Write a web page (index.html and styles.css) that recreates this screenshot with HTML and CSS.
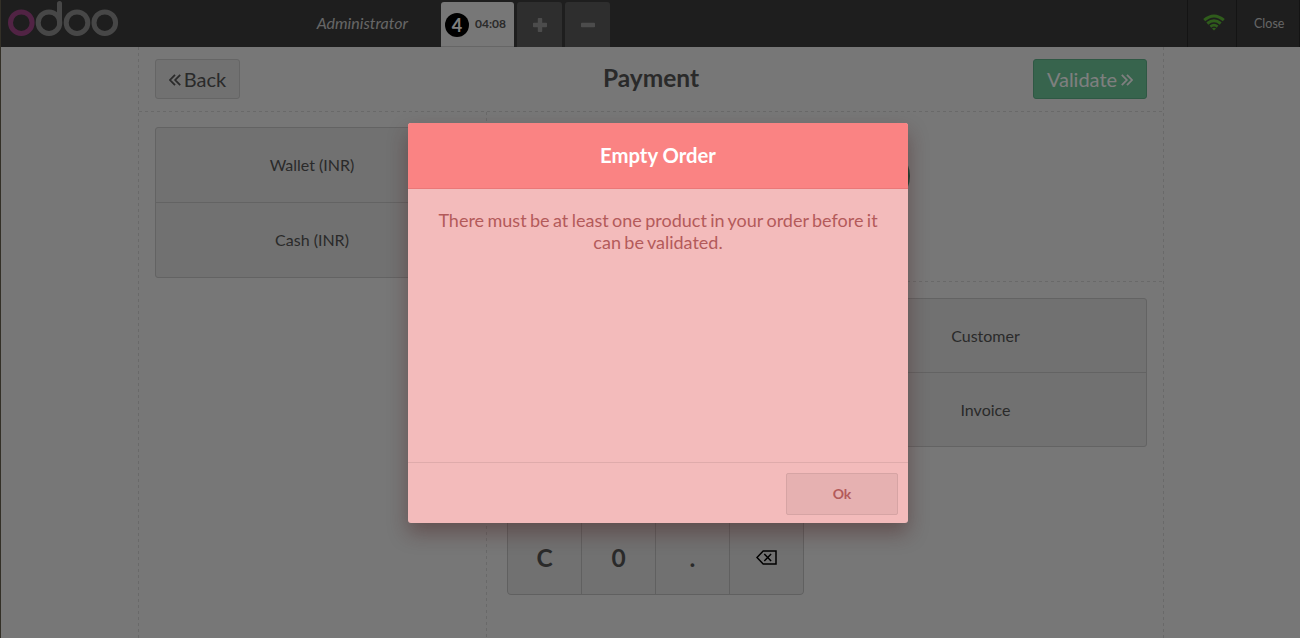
FILE: index.html
```html
<!DOCTYPE html>
<html lang="en">
<head>
<meta charset="utf-8">
<title>Payment</title>
<link rel="stylesheet" href="styles.css">
</head>
<body>
<div class="pos">
  <header class="topbar">
    <svg class="logo" width="112" height="38" viewBox="0 0 112 38" fill="none" stroke="#8f8f8f" stroke-width="5">
      <circle cx="14.3" cy="22.7" r="10.8" stroke="#a24689"/>
      <circle cx="42" cy="22.7" r="10.8"/>
      <path d="M52.5 23V3.500" stroke-linecap="round"/>
      <circle cx="70" cy="22.7" r="10.8"/>
      <circle cx="97.800" cy="22.7" r="10.8"/>
    </svg>
    <span class="username">Administrator</span>
    <nav class="orders">
      <div class="order-tab"><span class="order-no">4</span><span class="order-time">04:08</span></div>
      <div class="square-tab"><svg width="14" height="14" viewBox="0 0 14 14"><path d="M5.6 0h2.8q.8 0 .8.8v4h4q.8 0 .8.8v2.8q0 .8-.8.8h-4v4q0 .8-.8.8H5.6q-.8 0-.8-.8v-4h-4Q0 9.200 0 8.400V5.600q0-.8.8-.8h4v-4q0-.8.8-.8z"/></svg></div>
      <div class="square-tab"><svg width="14" height="14" viewBox="0 0 14 14"><rect y="4.800" width="14" height="4.400" rx=".8"/></svg></div>
    </nav>
    <div class="status">
      <svg width="22" height="17" viewBox="0 0 22 17" fill="none" stroke="#5eb937" stroke-width="3">
        <path d="M1.200 6.200Q11-2.200 20.800 6.200"/><path d="M4.300 9.500Q11 4.100 17.700 9.500"/><path d="M7.400 12.600Q11 9.800 14.600 12.600" stroke-width="2.600"/><path d="M9 14.400Q11 13 13 14.400L11 16.600Z" fill="#5eb937" stroke="none"/>
      </svg>
    </div>
    <div class="close">Close</div>
  </header>

  <main class="screen">
    <div class="heading">
      <button class="nav-btn back"><svg width="12" height="12" viewBox="0 0 12 12"><path d="M6 .8L1 6l5 5.200M11.200.8L6.200 6l5 5.200"/></svg>Back</button>
      <h1>Payment</h1>
      <button class="nav-btn next">Validate<svg width="12" height="12" viewBox="0 0 12 12"><path d="M.8.8l5 5.200-5 5.200M6 .8L11 6l-5 5.200"/></svg></button>
    </div>
    <div class="columns">
      <section class="methods">
        <div class="stack methods-list"><div>Wallet (INR)</div><div>Cash (INR)</div></div>
      </section>
      <section class="details">
        <div class="lines"><span class="bubble"></span></div>
        <div class="controls">
          <div class="keypad">
            <i></i><i></i><i></i><i></i>
            <i></i><i></i><i></i><i></i>
            <i></i><i></i><i></i><i></i>
            <i>C</i><i>0</i><i>.</i>
            <i><svg width="21" height="15" viewBox="0 0 21 15" fill="none" stroke="#000" stroke-width="1.500"><path d="M7.200 1H20v13H7.200L1 7.500z"/><path d="M8.300 4l6.800 7M15.100 4l-6.800 7"/></svg></i>
          </div>
          <div class="stack options"><div>Customer</div><div>Invoice</div></div>
        </div>
      </section>
    </div>
  </main>
</div>

<div class="overlay">
  <div class="popup">
    <h2>Empty Order</h2>
    <p>There must be at least one product in your order before it can be validated.</p>
    <footer><button class="ok">Ok</button></footer>
  </div>
</div>
</body>
</html>
```
FILE: styles.css
```css
:root {
  --dash-x: repeating-linear-gradient(90deg, #d2d2d2 0 3px, transparent 3px 6px);
  --dash-y: repeating-linear-gradient(180deg, #d2d2d2 0 3px, transparent 3px 6px);
}
* { box-sizing: border-box; }
body {
  margin: 0;
  height: 638px;
  overflow: hidden;
  font-family: Lato, sans-serif;
  color: #555;
}
button { font-family: inherit; }
h1, h2, p { margin: 0; }
.pos {
  height: 638px;
  display: flex;
  flex-direction: column;
  background: #eee;
  border-left: 1px solid #66604f;
}
.topbar {
  height: 47px;
  flex: none;
  display: flex;
  background: #3c3c3c;
}
.logo { margin-left: 6px; }
.username {
  width: 289px;
  text-align: right;
  font-size: 16px;
  font-style: italic;
  line-height: 45px;
  color: #ccc;
}
.orders {
  display: flex;
  gap: 3px;
  margin: 2px 0 0 33px;
}
.order-tab {
  width: 73px;
  display: flex;
  align-items: center;
  padding: 0 0 0 4px;
  gap: 6px;
  background: #eee;
  border-bottom: 1px solid #ccc;
  border-radius: 3px 3px 0 0;
}
.order-no {
  width: 24px;
  height: 24px;
  margin-top: 1px;
  border-radius: 50%;
  background: #000;
  color: #fff;
  font-size: 18px;
  font-weight: 700;
  line-height: 24px;
  text-align: center;
}
.order-time { font-size: 12px; font-weight: 700; margin-top: -1px; }
.square-tab {
  width: 45px;
  display: flex;
  align-items: center;
  justify-content: center;
  background: #5c5c5c;
  border-radius: 3px 3px 0 0;
  fill: #999;
}
.status {
  width: 49px;
  margin-left: auto;
  padding: 14px 0 0 15px;
  border-left: 1px solid #292929;
}
.close {
  width: 64px;
  padding-left: 17px;
  border-left: 1px solid #292929;
  border-right: 1px solid #292929;
  font-size: 12.500px;
  line-height: 48px;
  color: #ccc;
}
.screen {
  width: 1026px;
  flex: 1;
  margin-left: 137px;
  padding: 0 1px;
  display: flex;
  flex-direction: column;
  background: var(--dash-y) left / 1px 100% no-repeat, var(--dash-y) right / 1px 100% no-repeat;
}
.heading {
  height: 65px;
  flex: none;
  display: flex;
  justify-content: space-between;
  align-items: flex-start;
  padding: 12px 16px 0;
  background: var(--dash-x) bottom / 100% 1px no-repeat;
}
.heading h1 {
  font-size: 24.500px;
  font-weight: 700;
  line-height: 37px;
  margin-left: 29px;
}
.nav-btn {
  height: 40px;
  display: flex;
  align-items: center;
  justify-content: center;
  gap: 4px;
  padding: 0;
  border: 1px solid #cacaca;
  border-radius: 3px;
  background: #e2e2e2;
  font-size: 20px;
  color: #555;
}
.nav-btn svg { fill: none; stroke: currentColor; stroke-width: 1.8; margin-top: 2px; }
.back { width: 85px; gap: 3px; }
.next { width: 114px; background: #6ec89b; border-color: #5eb089; color: #fff; }
.columns { flex: 1; display: flex; }
.methods { width: 348px; padding: 15px 17px 0 16px; background: var(--dash-y) right / 1px 100% no-repeat; }
.details { flex: 1; display: flex; flex-direction: column; }
.lines {
  height: 170px;
  padding: 34px 0 0 363px;
  background: var(--dash-x) bottom / 100% 1px no-repeat;
}
.bubble { display: block; width: 60px; height: 60px; border-radius: 50%; background: #3e8a6a; }
.controls { display: flex; justify-content: space-between; padding: 16px 16px 0 20px; }
.stack {
  display: grid;
  border: 1px solid #c6c6c6;
  border-radius: 3px;
  background: #e2e2e2;
  font-size: 16px;
}
.stack div { display: flex; align-items: center; justify-content: center; }
.stack div + div { border-top: 1px solid #c6c6c6; }
.methods-list { height: 151px; grid-template-rows: 74px 75px; }
.methods-list div { padding: 0 1px 1px 0; }
.options { width: 323px; height: 149px; grid-template-rows: 73px 74px; }
.options div { padding-bottom: 1px; }
.keypad {
  width: 297px;
  height: 297px;
  display: grid;
  grid-template-columns: repeat(4, 1fr);
  grid-template-rows: repeat(4, 1fr);
  gap: 1px;
  border: 1px solid #c0c0c0;
  border-radius: 4px;
  overflow: hidden;
  background: #c0c0c0;
}
.keypad i {
  display: flex;
  align-items: center;
  justify-content: center;
  padding: 0 0 1px 0;
  background: #e2e2e2;
  font-size: 24.500px;
  font-style: normal;
  font-weight: 700;
}
.overlay {
  position: absolute;
  inset: 0;
  padding: 123px 0 0 408px;
  background: rgba(0, 0, 0, .5);
}
.popup {
  width: 500px;
  height: 400px;
  display: flex;
  flex-direction: column;
  overflow: hidden;
  border-radius: 3px;
  background: #f3bbbb;
  box-shadow: 0 10px 20px rgba(70, 25, 25, .4);
  text-align: center;
}
.popup h2 {
  height: 66px;
  background: #fa8383;
  border-bottom: 1px solid #ea7878;
  color: #fff;
  font-size: 20.300px;
  font-weight: 700;
  line-height: 65px;
}
.popup p {
  flex: 1;
  padding: 20px 16px 0;
  font-size: 18px;
  line-height: 22px;
  word-spacing: -1.2px;
  color: #b35a5a;
}
.popup footer {
  height: 61px;
  display: flex;
  justify-content: flex-end;
  padding: 10px 10px 0;
  border-top: 1px solid #dfabab;
}
.ok {
  width: 112px;
  height: 42px;
  padding: 0 0 2px;
  border: 1px solid #d6a4a4;
  border-radius: 2px;
  background: #e6b1b1;
  color: #b35a5a;
  font-size: 14px;
  font-weight: 700;
}
```
